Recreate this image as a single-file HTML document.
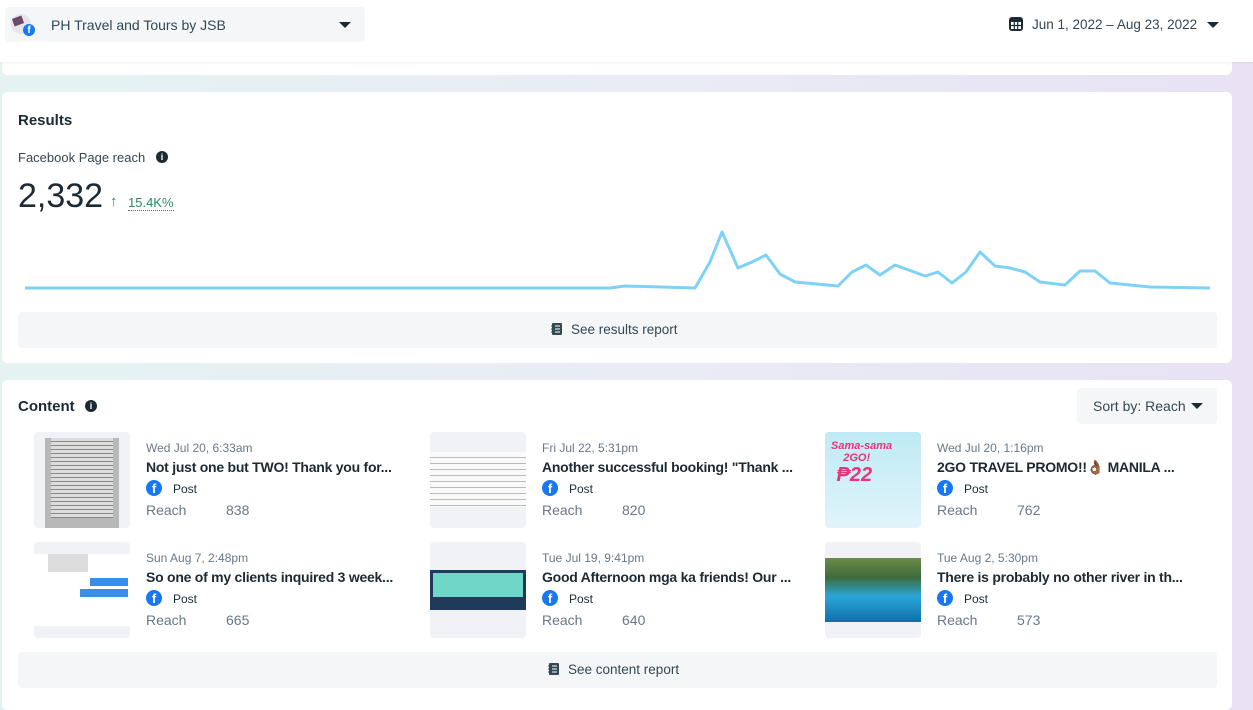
<!DOCTYPE html>
<html><head><meta charset="utf-8"><style>
*{margin:0;padding:0;box-sizing:border-box}
body{width:1253px;height:700px;overflow:hidden;font-family:"Liberation Sans",sans-serif;color:#1c2b33;background:linear-gradient(90deg,#e4f3f2 0%,#e9ecf5 50%,#e8e2f4 100%);position:relative}
.abs{position:absolute}
.hdr{left:0;top:0;width:1253px;height:62px;background:#fff;box-shadow:0 1px 2px rgba(0,0,0,.06)}
.card{background:#fff;border-radius:6px}
.btn{background:#f5f6f7;border-radius:4px}
.tri{width:0;height:0;border-left:6px solid transparent;border-right:6px solid transparent;border-top:6px solid #1c2b33}
.thumb{width:96px;height:96px;background:#f0f2f5;border-radius:4px;overflow:hidden}
.date{font-size:12px;color:#67788a}
.ttl{font-size:14px;font-weight:bold;color:#1c2b33;letter-spacing:-0.25px}
.post{font-size:12px;color:#1c2b33}
.reach{font-size:14px;color:#67788a}
.fb{width:16px;height:16px;border-radius:50%;background:#1877f2;color:#fff;font-weight:bold;font-size:13px;line-height:18px;text-align:center;overflow:hidden}
</style></head><body>
<div class="abs card" style="left:2px;top:40px;width:1230px;height:35px;border-radius:0 0 6px 6px"></div>
<div class="abs hdr"></div>
<div class="abs btn" style="left:5px;top:7px;width:360px;height:35px"></div>
<div class="abs" style="left:11px;top:14px;width:20px;height:20px;border-radius:50%;background:#e8e4ec"></div>
<div class="abs" style="left:13px;top:17px;width:10px;height:8px;background:#6b4a6a;transform:rotate(-20deg)"></div>
<div class="abs fb" style="left:23px;top:24px;width:12px;height:12px;font-size:10px;line-height:13px">f</div>
<div class="abs" style="left:51px;top:17px;font-size:14px;color:#344854">PH Travel and Tours by JSB</div>
<div class="abs tri" style="left:339px;top:22px"></div>
<svg class="abs" style="left:1008px;top:16px" width="16" height="16" viewBox="0 0 16 16"><rect x="1" y="1" width="14" height="14" rx="3" fill="#1c2b33"/><rect x="3" y="6" width="10" height="7" fill="#fff"/><path d="M3 9.5h10M6.3 6v7M9.7 6v7" stroke="#1c2b33" stroke-width="1.2"/></svg>
<div class="abs" style="left:1032px;top:17px;font-size:13.5px;color:#344854">Jun 1, 2022 – Aug 23, 2022</div>
<div class="abs tri" style="left:1207px;top:22px"></div>

<div class="abs card" style="left:2px;top:92px;width:1230px;height:271px"></div>
<div class="abs" style="left:18px;top:112px;font-size:15px;font-weight:bold">Results</div>
<div class="abs" style="left:18px;top:150px;font-size:13px;color:#344854">Facebook Page reach</div>
<div class="abs" style="left:156px;top:151px;width:12px;height:12px;border-radius:50%;background:#1c2b33;color:#fff;font-size:9px;font-weight:bold;text-align:center;line-height:12px">i</div>
<div class="abs" style="left:18px;top:177px;font-size:34px;color:#1c2b33">2,332</div>
<div class="abs" style="left:110px;top:193px;font-size:15px;color:#2a8a5e">↑</div>
<div class="abs" style="left:128px;top:196px;font-size:13px;color:#2a8a5e;border-bottom:1px dotted #2a8a5e;line-height:14px">15.4K%</div>
<svg class="abs" style="left:0;top:0" width="1253" height="320"><polyline fill="none" stroke="#7fd1f6" stroke-width="3" stroke-linejoin="round" points="25,288 610,288 625,286 695,288 710,262 722,232 738,268 752,262 766,255 780,274 795,282 838,286 852,272 866,265 880,275 895,265 925,276 938,272 952,283 966,272 980,252 995,266 1010,268 1025,272 1040,282 1065,285 1080,271 1095,271 1110,283 1150,287 1210,288"/></svg>
<div class="abs btn" style="left:18px;top:312px;width:1199px;height:36px"></div>
<svg class="abs" style="left:551px;top:323px" width="11" height="12" viewBox="0 0 11 12"><rect x="1" y="0" width="10" height="12" rx="1" fill="#344854"/><path d="M4 3h5M4 6h5M4 9h5" stroke="#fff"/><path d="M0 3h2M0 6h2M0 9h2" stroke="#344854"/></svg>
<div class="abs" style="left:571px;top:322px;font-size:13.5px;color:#344854">See results report</div>

<div class="abs card" style="left:2px;top:380px;width:1230px;height:330px"></div>
<div class="abs" style="left:18px;top:398px;font-size:15px;font-weight:bold">Content</div>
<div class="abs" style="left:85px;top:400px;width:12px;height:12px;border-radius:50%;background:#1c2b33;color:#fff;font-size:9px;font-weight:bold;text-align:center;line-height:12px">i</div>
<div class="abs btn" style="left:1077px;top:388px;width:140px;height:36px"></div>
<div class="abs" style="left:1093px;top:398px;font-size:14px;color:#344854">Sort by: Reach</div>
<div class="abs tri" style="left:1191px;top:403px"></div>

<div class="abs thumb" style="left:34px;top:432px"><div style="margin-left:11px;width:74px;height:96px;background:#b8b8b8"><div style="margin:6px;width:62px;height:80px;background:repeating-linear-gradient(#ddd 0 3px,#888 3px 4px)"></div></div></div>
<div class="abs thumb" style="left:430px;top:432px"><div style="margin-top:20px;height:55px;background:repeating-linear-gradient(#fafafa 0 5px,#bbb 5px 6px)"></div></div>
<div class="abs thumb" style="left:825px;top:432px"><div style="height:96px;background:linear-gradient(#bfeaf5,#e0f4fa)"><div style="padding:8px 0 0 6px;color:#e8357a;font-weight:bold;font-size:11px;font-style:italic">Sama-sama<br>&nbsp;&nbsp;&nbsp;&nbsp;2GO!<br><span style="font-size:20px">&nbsp;₱22</span></div></div></div>
<div class="abs thumb" style="left:34px;top:542px"><div style="margin-top:12px;height:72px;background:#fff"><div style="margin:6px 0 0 14px;width:40px;height:18px;background:#ddd"></div><div style="margin:6px 0 0 56px;width:38px;height:8px;background:#3b8de6"></div><div style="margin:3px 0 0 46px;width:48px;height:8px;background:#3b8de6"></div></div></div>
<div class="abs thumb" style="left:430px;top:542px"><div style="margin-top:28px;height:40px;background:#1f3a5a;padding:3px"><div style="height:24px;background:#6fd6c8"></div></div></div>
<div class="abs thumb" style="left:825px;top:542px"><div style="margin-top:16px;height:64px;background:linear-gradient(#6b8a4a 0,#3d6b3a 30%,#2aa6d8 60%,#0f6ea8 100%)"></div></div>

<div class="abs" style="left:146px;top:441px"><div class="date">Wed Jul 20, 6:33am</div><div class="ttl" style="margin-top:4px">Not just one but TWO! Thank you for...</div></div>
<div class="abs" style="left:542px;top:441px"><div class="date">Fri Jul 22, 5:31pm</div><div class="ttl" style="margin-top:4px">Another successful booking! "Thank ...</div></div>
<div class="abs" style="left:937px;top:441px"><div class="date">Wed Jul 20, 1:16pm</div><div class="ttl" style="margin-top:4px">2GO TRAVEL PROMO!!👌🏾 MANILA ...</div></div>
<div class="abs" style="left:146px;top:551px"><div class="date">Sun Aug 7, 2:48pm</div><div class="ttl" style="margin-top:4px">So one of my clients inquired 3 week...</div></div>
<div class="abs" style="left:542px;top:551px"><div class="date">Tue Jul 19, 9:41pm</div><div class="ttl" style="margin-top:4px">Good Afternoon mga ka friends! Our ...</div></div>
<div class="abs" style="left:937px;top:551px"><div class="date">Tue Aug 2, 5:30pm</div><div class="ttl" style="margin-top:4px">There is probably no other river in th...</div></div>

<div class="abs fb" style="left:146px;top:480px">f</div><div class="abs post" style="left:173px;top:482px">Post</div>
<div class="abs fb" style="left:542px;top:480px">f</div><div class="abs post" style="left:569px;top:482px">Post</div>
<div class="abs fb" style="left:937px;top:480px">f</div><div class="abs post" style="left:964px;top:482px">Post</div>
<div class="abs fb" style="left:146px;top:590px">f</div><div class="abs post" style="left:173px;top:592px">Post</div>
<div class="abs fb" style="left:542px;top:590px">f</div><div class="abs post" style="left:569px;top:592px">Post</div>
<div class="abs fb" style="left:937px;top:590px">f</div><div class="abs post" style="left:964px;top:592px">Post</div>

<div class="abs reach" style="left:146px;top:502px">Reach</div><div class="abs reach" style="left:226px;top:502px">838</div>
<div class="abs reach" style="left:542px;top:502px">Reach</div><div class="abs reach" style="left:622px;top:502px">820</div>
<div class="abs reach" style="left:937px;top:502px">Reach</div><div class="abs reach" style="left:1017px;top:502px">762</div>
<div class="abs reach" style="left:146px;top:612px">Reach</div><div class="abs reach" style="left:226px;top:612px">665</div>
<div class="abs reach" style="left:542px;top:612px">Reach</div><div class="abs reach" style="left:622px;top:612px">640</div>
<div class="abs reach" style="left:937px;top:612px">Reach</div><div class="abs reach" style="left:1017px;top:612px">573</div>

<div class="abs btn" style="left:18px;top:652px;width:1199px;height:36px"></div>
<svg class="abs" style="left:548px;top:663px" width="11" height="12" viewBox="0 0 11 12"><rect x="1" y="0" width="10" height="12" rx="1" fill="#344854"/><path d="M4 3h5M4 6h5M4 9h5" stroke="#fff"/><path d="M0 3h2M0 6h2M0 9h2" stroke="#344854"/></svg>
<div class="abs" style="left:568px;top:662px;font-size:13.5px;color:#344854">See content report</div>
</body></html>
